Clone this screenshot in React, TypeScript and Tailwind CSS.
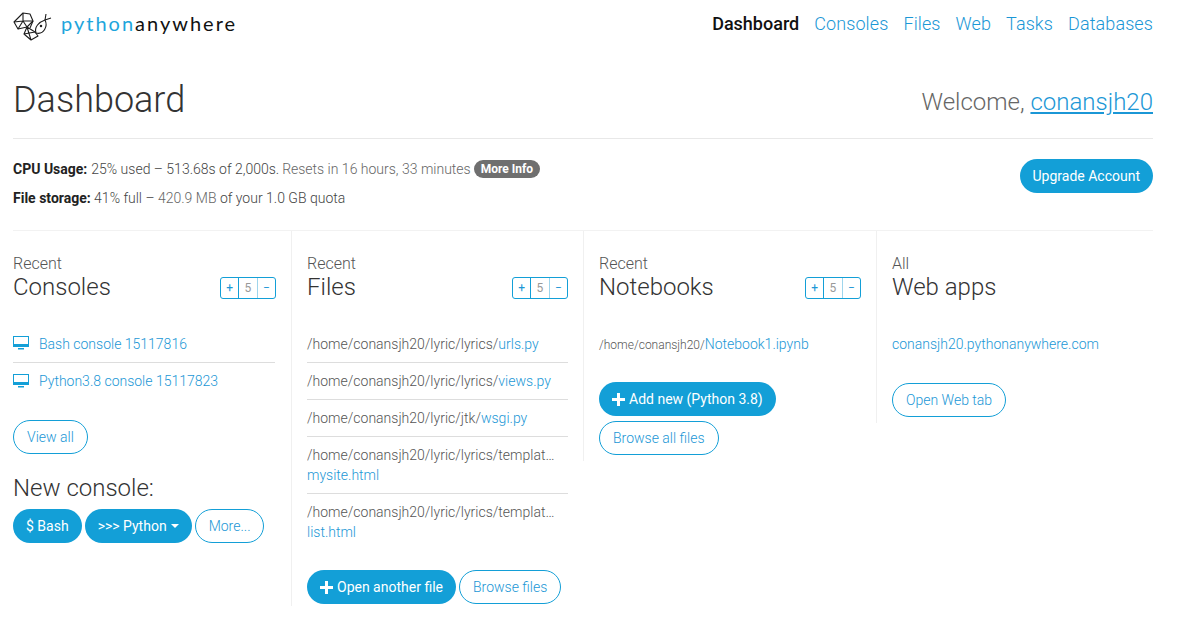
const BLUE = 'text-[#1b97d6]';

function Logo() {
  return (
    <svg width="40" height="30" viewBox="0 0 40 30" fill="none" stroke="#1c1c1c" strokeWidth="1.1" strokeLinejoin="round" className="mt-[7px]">
      <path d="M1 10 L10 1 L17 2 L20 9 L14 15 L5 17 Z" />
      <path d="M10 1 L10 9 L1 10 M10 9 L20 9 M10 9 L5 17 M10 9 L14 15" />
      <path d="M14 15 L11 22 L18 28 L25 24 L22 20 Z M14 15 L18 28 M11 22 L22 20" />
      <path d="M20 9 L17 16" />
      <path d="M23 21 C21 15 26 10 32 8 C35 14 31 23 23 21 Z" />
      <path d="M32 8 L33 2 M32 8 L38 6" />
      <circle cx="28" cy="14" r="0.7" fill="#1c1c1c" />
    </svg>
  );
}

function MonitorIcon() {
  return (
    <svg width="16" height="14" viewBox="0 0 16 14" className="mr-[10px] -mt-[2px]" fill="#139fd7" fillRule="evenodd">
      <path d="M0 0h16v11H0z M1 1v7h14V1z" />
      <path d="M5 12h6v1.5H5z" />
    </svg>
  );
}

function Stepper({ pull }: { pull?: boolean }) {
  return (
    <div className={`flex h-[22px] w-[56px] mb-[2px] rounded-[3px] border border-[#139fd7] text-[12px] leading-[20px] text-center ${pull ? '-mr-[1px]' : ''}`}>
      <span className="flex-1 border-r border-[#139fd7] text-[#1b97d6]">+</span>
      <span className="flex-1 border-r border-[#9fd5ec] text-[#999]">5</span>
      <span className="flex-1 text-[#1b97d6]">−</span>
    </div>
  );
}

function ColumnHead({ kicker, title, stepper = true, pull }: { kicker: string; title: string; stepper?: boolean; pull?: boolean }) {
  return (
    <div className="flex items-end justify-between h-[42px] mb-[25px]">
      <div>
        <div className="text-[16px] leading-[18px] font-light text-[#555]">{kicker}</div>
        <div className="text-[24px] leading-[28px] font-light text-[#333]">{title}</div>
      </div>
      {stepper && <Stepper pull={pull} />}
    </div>
  );
}

function SolidButton({ children }: { children: React.ReactNode }) {
  return (
    <span className="inline-flex items-center h-[34px] px-[13px] rounded-full bg-[#139fd7] text-white text-[14px] font-normal whitespace-nowrap">
      {children}
    </span>
  );
}

function OutlineButton({ children }: { children: React.ReactNode }) {
  return (
    <span className={`inline-flex items-center h-[34px] px-[13px] rounded-full border border-[#139fd7] ${BLUE} text-[14px] font-light whitespace-nowrap`}>
      {children}
    </span>
  );
}

function Plus() {
  return (
    <svg width="13" height="13" viewBox="0 0 13 13" className="mr-[4px]" fill="white">
      <path d="M5 0h3v5h5v3H8v5H5V8H0V5h5z" />
    </svg>
  );
}

function FileRow({ dir, name }: { dir: string; name: string }) {
  return (
    <div className="py-[8px] text-[14px] leading-[20px] font-light text-[#555] border-b border-[#ddd]">
      {dir}
      <span className={BLUE}>{name}</span>
    </div>
  );
}

function LongFileRow({ name, last }: { name: string; last?: boolean }) {
  return (
    <div className={`py-[8px] text-[14px] leading-[20px] font-light ${last ? '' : 'border-b border-[#ddd]'}`}>
      <div className="text-[#555] truncate w-[252px]">/home/conansjh20/lyric/lyrics/templates/myapp</div>
      <div className={BLUE}>{name}</div>
    </div>
  );
}

export default function App() {
  return (
    <div className="min-h-[627px] bg-white px-[13px] text-[#333] font-['Roboto',sans-serif] w-[1166px]">
      {/* nav */}
      <div className="flex items-center justify-between h-[48px] pb-[2px]">
        <div className="flex items-center">
          <Logo />
          <span className="ml-[8px] text-[20px] font-['Lato',sans-serif] font-normal tracking-[2px] text-[#111]">
            <span className="text-[#1ea5dc]">python</span>anywhere
          </span>
        </div>
        <div className={`flex gap-[15px] text-[18px] font-light tracking-[0.1px] ${BLUE}`}>
          <span className="font-medium text-[#111] tracking-normal">Dashboard</span>
          <span>Consoles</span>
          <span>Files</span>
          <span>Web</span>
          <span>Tasks</span>
          <span>Databases</span>
        </div>
      </div>

      {/* heading */}
      <div className="flex items-end justify-between h-[91px] border-b border-[#e8e8e8] pb-[18px]">
        <h1 className="text-[36px] leading-[40px] font-light text-[#333]">Dashboard</h1>
        <div className="text-[24px] leading-[30px] font-light text-[#666] mb-[3px]">
          Welcome, <span className={`${BLUE} underline`}>conansjh20</span>
        </div>
      </div>

      {/* usage */}
      <div className="flex items-start justify-between h-[92px] pt-[20px] border-b border-[#f2f2f2] text-[14px] font-light text-[#444]">
        <div className="flex flex-col gap-[9px] leading-[20px]">
          <div className="flex items-center">
            <span className="font-bold text-[#222] mr-1">CPU Usage:</span>
            25% used – 513.68s of 2,000s. <span className="text-[#666] ml-[3px]">Resets in 16 hours, 33 minutes</span>
            <span className="ml-[3px] h-[18px] px-[7px] rounded-full bg-[#6f6f6f] text-white text-[12px] font-bold leading-[18px]">More Info</span>
          </div>
          <div>
            <span className="font-bold text-[#222]">File storage:</span> 41% full – <span className="text-[#666]">420.9 MB</span> of your 1.0 GB quota
          </div>
        </div>
        <SolidButton>Upgrade Account</SolidButton>
      </div>

      {/* columns */}
      <div className="flex items-start">
        <div className="w-[278px] pr-[16px] pt-[28px]">
          <ColumnHead kicker="Recent" title="Consoles" pull />
          <div className={`flex items-center h-[37px] border-b border-[#ddd] text-[14px] font-light ${BLUE}`}>
            <MonitorIcon />
            Bash console 15117816
          </div>
          <div className={`flex items-center h-[37px] text-[14px] font-light ${BLUE}`}>
            <MonitorIcon />
            Python3.8 console 15117823
          </div>
          <div className="mt-[20px]">
            <OutlineButton>View all</OutlineButton>
          </div>
          <div className="mt-[19px] text-[24px] leading-[30px] font-light">New console:</div>
          <div className="flex gap-[3px] mt-[6px]">
            <SolidButton>$ Bash</SolidButton>
            <SolidButton>
              &gt;&gt;&gt; Python
              <span className="ml-[4px] border-x-[4px] border-t-[4px] border-x-transparent border-t-white" />
            </SolidButton>
            <OutlineButton>More...</OutlineButton>
          </div>
        </div>

        <div className="w-[292px] border-l border-[#f0f0f0] px-[15px] pt-[28px] pb-[2px]">
          <ColumnHead kicker="Recent" title="Files" />
          <div>
            <FileRow dir="/home/conansjh20/lyric/lyrics/" name="urls.py" />
            <FileRow dir="/home/conansjh20/lyric/lyrics/" name="views.py" />
            <FileRow dir="/home/conansjh20/lyric/jtk/" name="wsgi.py" />
            <LongFileRow name="mysite.html" />
            <LongFileRow name="list.html" last />
          </div>
          <div className="flex gap-[3px] mt-[20px]">
            <SolidButton>
              <Plus />
              Open another file
            </SolidButton>
            <OutlineButton>Browse files</OutlineButton>
          </div>
        </div>

        <div className="w-[293px] border-l border-[#f0f0f0] px-[15px] pt-[28px] pb-[6px]">
          <ColumnHead kicker="Recent" title="Notebooks" />
          <div className="h-[37px] flex items-center text-[14px] font-light">
            <span className="text-[12px] text-[#555]">/home/conansjh20/</span>
            <span className={BLUE}>Notebook1.ipynb</span>
          </div>
          <div className="mt-[19px]">
            <SolidButton>
              <Plus />
              Add new (Python 3.8)
            </SolidButton>
          </div>
          <div className="mt-[5px]">
            <OutlineButton>Browse all files</OutlineButton>
          </div>
        </div>

        <div className="flex-1 border-l border-[#f0f0f0] px-[15px] pt-[28px] pb-[6px]">
          <ColumnHead kicker="All" title="Web apps" stepper={false} />
          <div className={`h-[37px] flex items-center text-[14px] font-light ${BLUE}`}>conansjh20.pythonanywhere.com</div>
          <div className="mt-[20px]">
            <OutlineButton>Open Web tab</OutlineButton>
          </div>
        </div>
      </div>
    </div>
  );
}
